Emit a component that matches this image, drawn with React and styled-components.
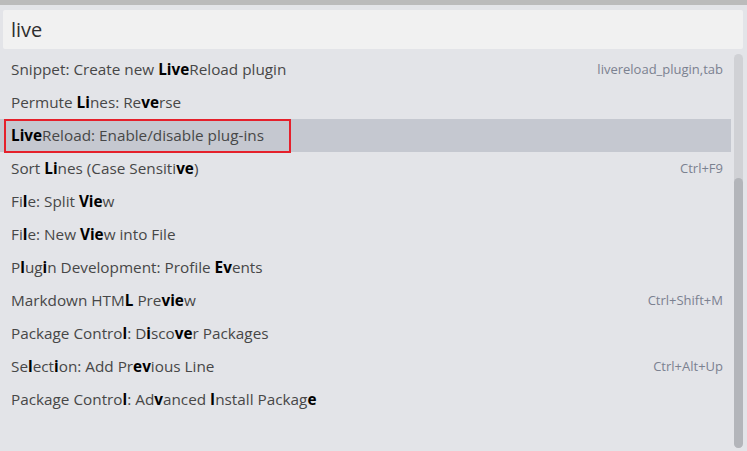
import React from 'react';
import styled, { createGlobalStyle } from 'styled-components';

const GlobalStyle = createGlobalStyle`
    html, body {
        margin: 0;
        padding: 0;
        background: #e3e4e8;
    }
    body {
        font-family: 'Open Sans', 'Noto Sans', sans-serif;
    }
`;

const Window = styled.div`
    width: 747px;
    height: 451px;
    overflow: hidden;
    background: #e3e4e8;
    border-top: 5px solid #bbbbbb;
    box-sizing: border-box;
    display: flex;
    flex-direction: column;
`;

const SearchBox = styled.div`
    margin: 5px 4px 0 3px;
    height: 39px;
    background: #f1f1f1;
    border-radius: 2px;
    display: flex;
    align-items: center;
    padding-left: 8px;
    font-size: 20px;
    color: #2e2e2e;
`;

const Body = styled.div`
    flex: 1;
    display: flex;
    padding-top: 4px;
    min-height: 0;
`;

const List = styled.div`
    flex: 1;
    display: flex;
    flex-direction: column;
`;

const Row = styled.div`
    height: 33px;
    width: 731px;
    box-sizing: border-box;
    display: flex;
    align-items: center;
    justify-content: space-between;
    padding: 0 8px 1px 11px;
    background: ${(p) => (p.$selected ? '#c5c8d0' : 'transparent')};
    position: relative;
`;

const Label = styled.span`
    font-size: 15.3px;
    color: #474747;
    white-space: pre;
`;

const Match = styled.b`
    color: #000;
    font-weight: 700;
`;

const Shortcut = styled.span`
    font-size: 13px;
    color: #7b8190;
`;

const Highlight = styled.div`
    position: absolute;
    left: 4px;
    top: 0;
    width: 287px;
    height: 34px;
    border: 2px solid #e5202b;
    box-sizing: border-box;
`;

const Track = styled.div`
    width: 9px;
    margin: 1px 4px 3px 3px;
    background: #d0d1d5;
    border-radius: 5px;
    display: flex;
    flex-direction: column;
    justify-content: flex-end;
`;

const Thumb = styled.div`
    height: 270px;
    background: #b3b5ba;
    border-radius: 5px;
`;

const items = [
    { parts: ['Snippet: Create new ', ['Live'], 'Reload plugin'], key: 'livereload_plugin,tab' },
    { parts: ['Permute ', ['Li'], 'nes: Re', ['ve'], 'rse'] },
    { parts: [['Live'], 'Reload: Enable/disable plug-ins'], selected: true },
    { parts: ['Sort ', ['Li'], 'nes (Case Sensiti', ['ve'], ')'], key: 'Ctrl+F9' },
    { parts: ['Fi', ['l'], 'e: Split ', ['Vie'], 'w'] },
    { parts: ['Fi', ['l'], 'e: New ', ['Vie'], 'w into File'] },
    { parts: ['P', ['l'], 'ug', ['i'], 'n Development: Profile ', ['Ev'], 'ents'] },
    { parts: ['Markdown HTM', ['L'], ' Pre', ['vie'], 'w'], key: 'Ctrl+Shift+M' },
    { parts: ['Package Contro', ['l'], ': D', ['i'], 'sco', ['ve'], 'r Packages'] },
    { parts: ['Se', ['l'], 'ect', ['i'], 'on: Add Pr', ['ev'], 'ious Line'], key: 'Ctrl+Alt+Up' },
    { parts: ['Package Contro', ['l'], ': Ad', ['v'], 'anced ', ['I'], 'nstall Packag', ['e']] },
];

const App = () => {
    return (
        <Window>
            <GlobalStyle />
            <SearchBox>live</SearchBox>
            <Body>
                <List>
                    {items.map((item, i) => (
                        <Row key={i} $selected={item.selected}>
                            <Label>
                                {item.parts.map((p, j) =>
                                    Array.isArray(p) ? <Match key={j}>{p[0]}</Match> : p
                                )}
                            </Label>
                            {item.key && <Shortcut>{item.key}</Shortcut>}
                            {item.selected && <Highlight />}
                        </Row>
                    ))}
                </List>
                <Track>
                    <Thumb />
                </Track>
            </Body>
        </Window>
    );
};

export default App;
